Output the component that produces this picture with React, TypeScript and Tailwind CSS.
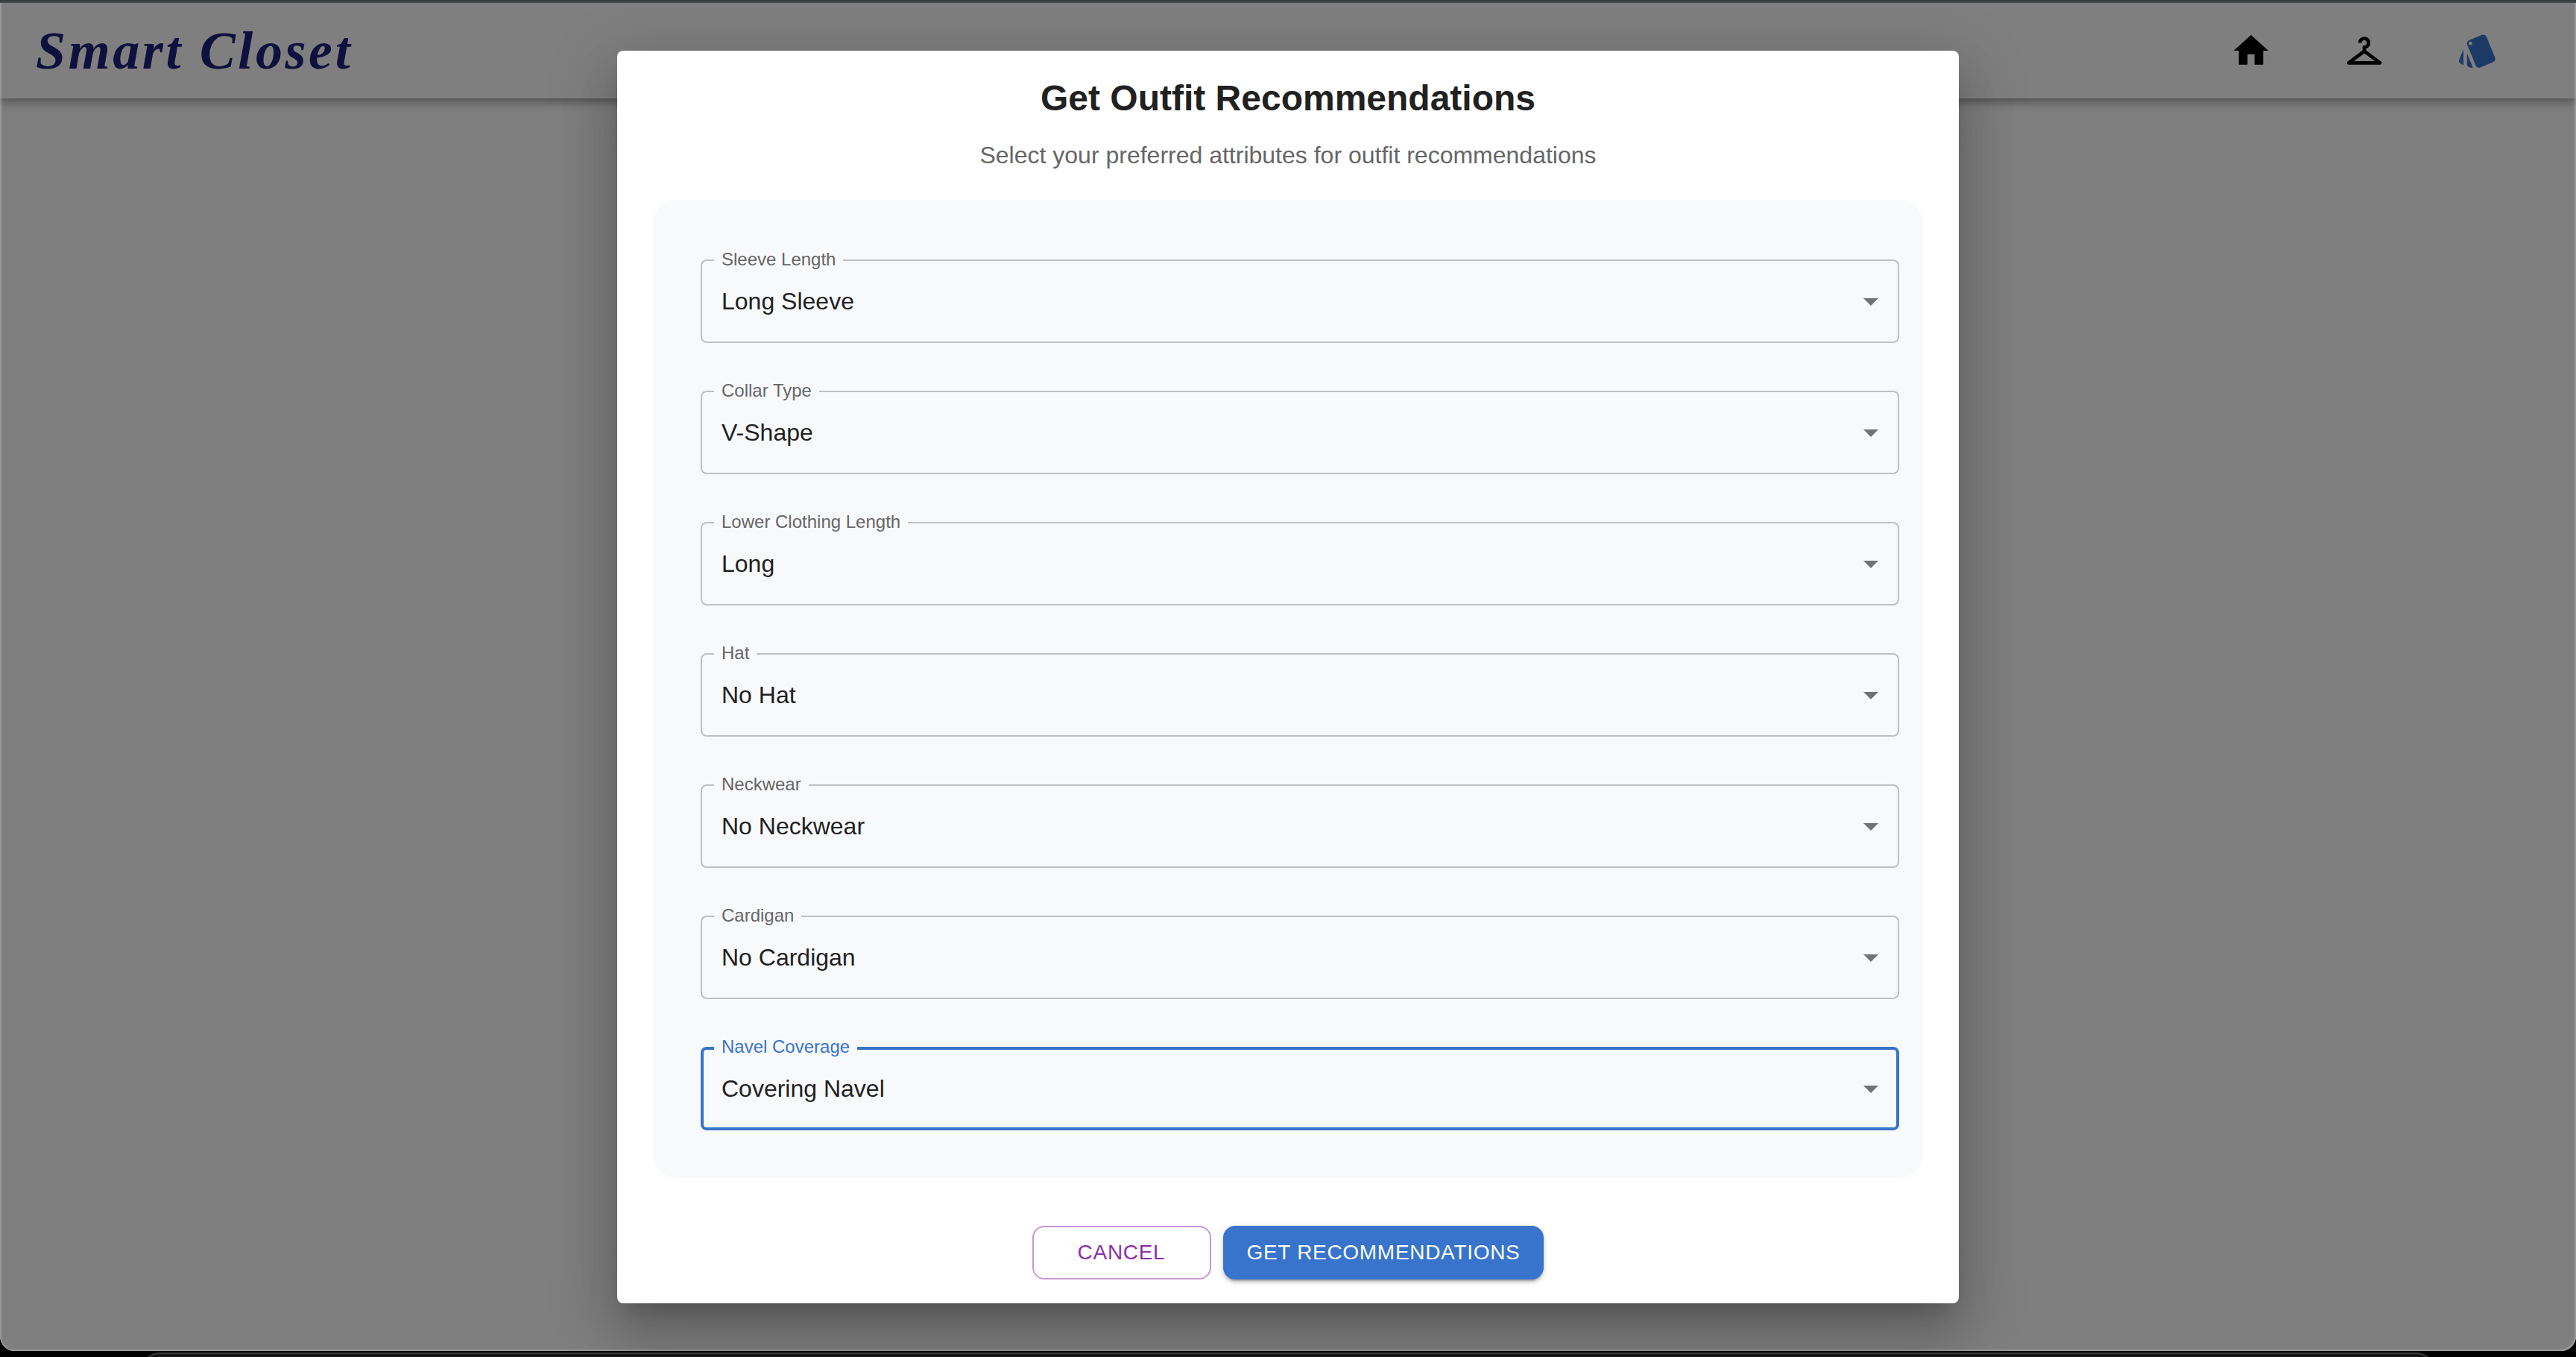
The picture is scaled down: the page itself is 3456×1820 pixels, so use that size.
import { MdArrowDropDown, MdCheckroom, MdHome, MdStyle } from "react-icons/md";

const fields = [
  { id: "sleeve", label: "Sleeve Length", value: "Long Sleeve", options: ["Short Sleeve", "No Sleeve"] },
  { id: "collar", label: "Collar Type", value: "V-Shape", options: ["Square", "Round"] },
  { id: "lower", label: "Lower Clothing Length", value: "Long", options: ["Medium", "Short"] },
  { id: "hat", label: "Hat", value: "No Hat", options: ["Hat"] },
  { id: "neckwear", label: "Neckwear", value: "No Neckwear", options: ["Neckwear"] },
  { id: "cardigan", label: "Cardigan", value: "No Cardigan", options: ["Cardigan"] },
  { id: "navel", label: "Navel Coverage", value: "Covering Navel", options: ["Showing Navel"], active: true },
];

type Field = (typeof fields)[number];

function SelectField({ id, label, value, options, active }: Field) {
  return (
    <div className="relative">
      <label
        htmlFor={id}
        className={`absolute -top-4 left-[18px] bg-[#f8f9fb] px-[10px] text-2xl leading-8 ${
          active ? "text-[#3874cb]" : "text-[#666666]"
        }`}
      >
        {label}
      </label>
      <select
        id={id}
        defaultValue={value}
        className={`block h-28 w-full appearance-none rounded-lg bg-transparent text-[32px] text-[#212121] outline-none ${
          active ? "border-4 border-[#3874cb] px-6" : "border-2 border-[#bfc0c1] px-[26px]"
        }`}
      >
        <option>{value}</option>
        {options.map((option) => (
          <option key={option}>{option}</option>
        ))}
      </select>
      <MdArrowDropDown className="pointer-events-none absolute top-8 right-[14px] size-12 text-[#717273]" />
    </div>
  );
}

function Header() {
  return (
    <header className="flex h-32 items-center justify-between bg-white pr-26 pl-12 shadow-[0_4px_8px_-2px_rgba(0,0,0,0.2),0_8px_10px_rgba(0,0,0,0.14),0_2px_20px_rgba(0,0,0,0.12)]">
      <a href="#" className="font-['Liberation_Serif',serif] text-7xl leading-none font-bold tracking-wider text-[#1e207c] italic">
        Smart Closet
      </a>
      <nav className="flex gap-24 text-black">
        <a href="#home" aria-label="Home">
          <MdHome className="size-14" />
        </a>
        <a href="#closet" aria-label="Closet">
          <MdCheckroom className="size-14" />
        </a>
        <a href="#outfits" aria-label="Outfits" className="text-[#3874cb]">
          <MdStyle className="size-14" />
        </a>
      </nav>
    </header>
  );
}

function RecommendationsDialog() {
  return (
    <div
      role="dialog"
      aria-labelledby="dialog-title"
      className="w-full max-w-[1800px] rounded-lg bg-white px-12 pt-8 pb-8 text-center shadow-[0_22px_30px_-14px_rgba(0,0,0,0.2),0_48px_76px_6px_rgba(0,0,0,0.14),0_18px_92px_16px_rgba(0,0,0,0.12)]"
    >
      <h1 id="dialog-title" className="text-5xl leading-[64px] font-bold text-[#212121]">
        Get Outfit Recommendations
      </h1>
      <p className="mt-4 text-[32px] leading-[56px] text-[#666666]">Select your preferred attributes for outfit recommendations</p>
      <form className="mt-8">
        <div className="flex flex-col gap-16 rounded-[32px] bg-[#f8f9fb] pt-20 pr-8 pb-16 pl-16 text-left">
          {fields.map((field) => (
            <SelectField key={field.id} {...field} />
          ))}
        </div>
        <div className="mt-16 flex justify-center gap-4 text-[28px] leading-[48px] tracking-wide">
          <button type="button" className="w-60 rounded-2xl border-2 border-[#c996d5] py-[10px] text-[#8c2fa8]">
            CANCEL
          </button>
          <button
            type="button"
            className="rounded-2xl bg-[#3874cb] px-8 py-3 text-white shadow-[0_6px_2px_-4px_rgba(0,0,0,0.2),0_4px_4px_rgba(0,0,0,0.14),0_2px_10px_rgba(0,0,0,0.12)]"
          >
            GET RECOMMENDATIONS
          </button>
        </div>
      </form>
    </div>
  );
}

export default function App() {
  return (
    <div className="flex min-h-screen flex-col bg-black font-['Liberation_Sans',Arial,sans-serif]">
      <div className="h-1 border-b-2 border-[#474c4c] bg-[#343c40]" />
      <div className="relative flex flex-1 flex-col overflow-hidden rounded-b-[20px] bg-white">
        <Header />
        <div className="absolute inset-0 flex items-center justify-center rounded-b-[20px] bg-black/50 shadow-[inset_2px_0_0_rgba(255,255,255,0.2),inset_-2px_-2px_0_rgba(255,255,255,0.2)]">
          <RecommendationsDialog />
        </div>
      </div>
      <div className="h-2 overflow-hidden px-[190px] pt-[2px]">
        <div className="h-12 rounded-t-[24px] border-t-2 border-[#3a3a3a] bg-[#161616]" />
      </div>
    </div>
  );
}
